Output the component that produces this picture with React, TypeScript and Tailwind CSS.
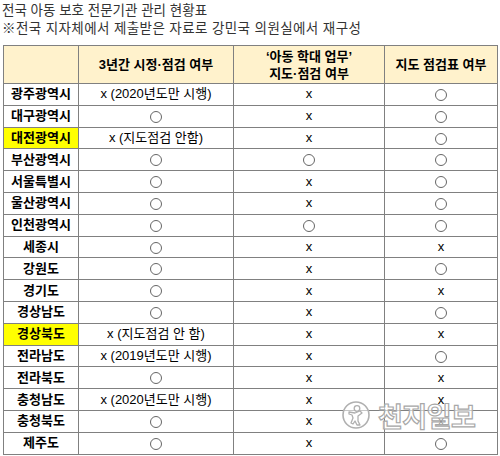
import React from "react";

type Cell = "o" | "x" | string;
const rows: { name: string; hl?: boolean; c: [Cell, Cell, Cell] }[] = [
  { name: "광주광역시", c: ["x (2020년도만 시행)", "x", "o"] },
  { name: "대구광역시", c: ["o", "x", "o"] },
  { name: "대전광역시", hl: true, c: ["x (지도점검 안함)", "x", "o"] },
  { name: "부산광역시", c: ["o", "o", "o"] },
  { name: "서울특별시", c: ["o", "x", "o"] },
  { name: "울산광역시", c: ["o", "x", "o"] },
  { name: "인천광역시", c: ["o", "o", "o"] },
  { name: "세종시", c: ["o", "x", "x"] },
  { name: "강원도", c: ["o", "x", "o"] },
  { name: "경기도", c: ["o", "x", "x"] },
  { name: "경상남도", c: ["o", "x", "o"] },
  { name: "경상북도", hl: true, c: ["x (지도점검 안 함)", "x", "x"] },
  { name: "전라남도", c: ["x (2019년도만 시행)", "x", "o"] },
  { name: "전라북도", c: ["o", "x", "x"] },
  { name: "충청남도", c: ["x (2020년도만 시행)", "x", "x"] },
  { name: "충청북도", c: ["o", "x", "x"] },
  { name: "제주도", c: ["o", "x", "o"] },
];

function Val({ v }: { v: Cell }) {
  if (v === "o")
    return (
      <span className="inline-block w-[12px] h-[12px] rounded-full border border-[#666] align-middle" />
    );
  return <span>{v}</span>;
}

export default function App() {
  return (
    <div
      className="w-[500px] h-[456px] bg-white overflow-hidden relative"
      style={{ fontFamily: '"Liberation Sans", "Noto Sans CJK KR", sans-serif' }}
    >
      <div className="pl-[2px] pt-[2px] text-[13.5px] leading-[18px] text-[#333]">
        <div>전국 아동 보호 전문기관 관리 현황표</div>
        <div className="tracking-[0.4px]">※전국 지자체에서 제출받은 자료로 강민국 의원실에서 재구성</div>
      </div>
      <table className="ml-[3px] mt-[7px] border-collapse table-fixed w-[494px] text-black">
        <colgroup>
          <col className="w-[75px]" />
          <col className="w-[155px]" />
          <col className="w-[151px]" />
          <col className="w-[113px]" />
        </colgroup>
        <thead>
          <tr className="h-[38px] bg-[#fff2cc] text-[13px] font-bold leading-[17px]">
            <th className="border border-[#808080] p-0"></th>
            <th className="border border-[#808080] p-0 font-bold">3년간 시정·점검 여부</th>
            <th className="border border-[#808080] p-0 font-bold">
              <div>‘아동 학대 업무’</div>
              <div>지도·점검 여부</div>
            </th>
            <th className="border border-[#808080] p-0 font-bold">지도 점검표 여부</th>
          </tr>
        </thead>
        <tbody>
          {rows.map((r) => (
            <tr key={r.name} className="h-[21.8px] text-[13px] leading-[14px]">
              <td
                className={
                  "border border-[#808080] p-0 text-center font-bold text-[13px] " +
                  (r.hl ? "bg-[#ffff00]" : "")
                }
              >
                {r.name}
              </td>
              {r.c.map((v, i) => (
                <td key={i} className="border border-[#808080] p-0 text-center">
                  <Val v={v} />
                </td>
              ))}
            </tr>
          ))}
        </tbody>
      </table>
      <div className="absolute left-[341px] top-[400px] flex items-center gap-[7px] pointer-events-none">
        <svg width="30" height="30" viewBox="0 0 30 30">
          <circle cx="15" cy="15" r="13" fill="rgba(255,255,255,0.55)" stroke="#b0b0b0" strokeWidth="1.6" />
          <circle cx="16" cy="8.5" r="2.8" fill="rgba(255,255,255,0.7)" stroke="#b0b0b0" strokeWidth="1.3" />
          <path
            d="M8 12 L14 13 L19 11 L21 13 L17 16 L17 21 L19 25 L16 25 L14 21 L12 24 L10 23 L12 18 L11 15 L8 14 Z"
            fill="rgba(255,255,255,0.7)"
            stroke="#b0b0b0"
            strokeWidth="1.3"
            strokeLinejoin="round"
          />
        </svg>
        <span
          className="text-[27px] font-bold leading-none text-[rgba(255,255,255,0.6)] [-webkit-text-stroke:1.2px_#a8a8a8] tracking-[-0.5px]"
          style={{ fontFamily: '"Noto Sans CJK KR", sans-serif' }}
        >
          천지일보
        </span>
      </div>
    </div>
  );
}
